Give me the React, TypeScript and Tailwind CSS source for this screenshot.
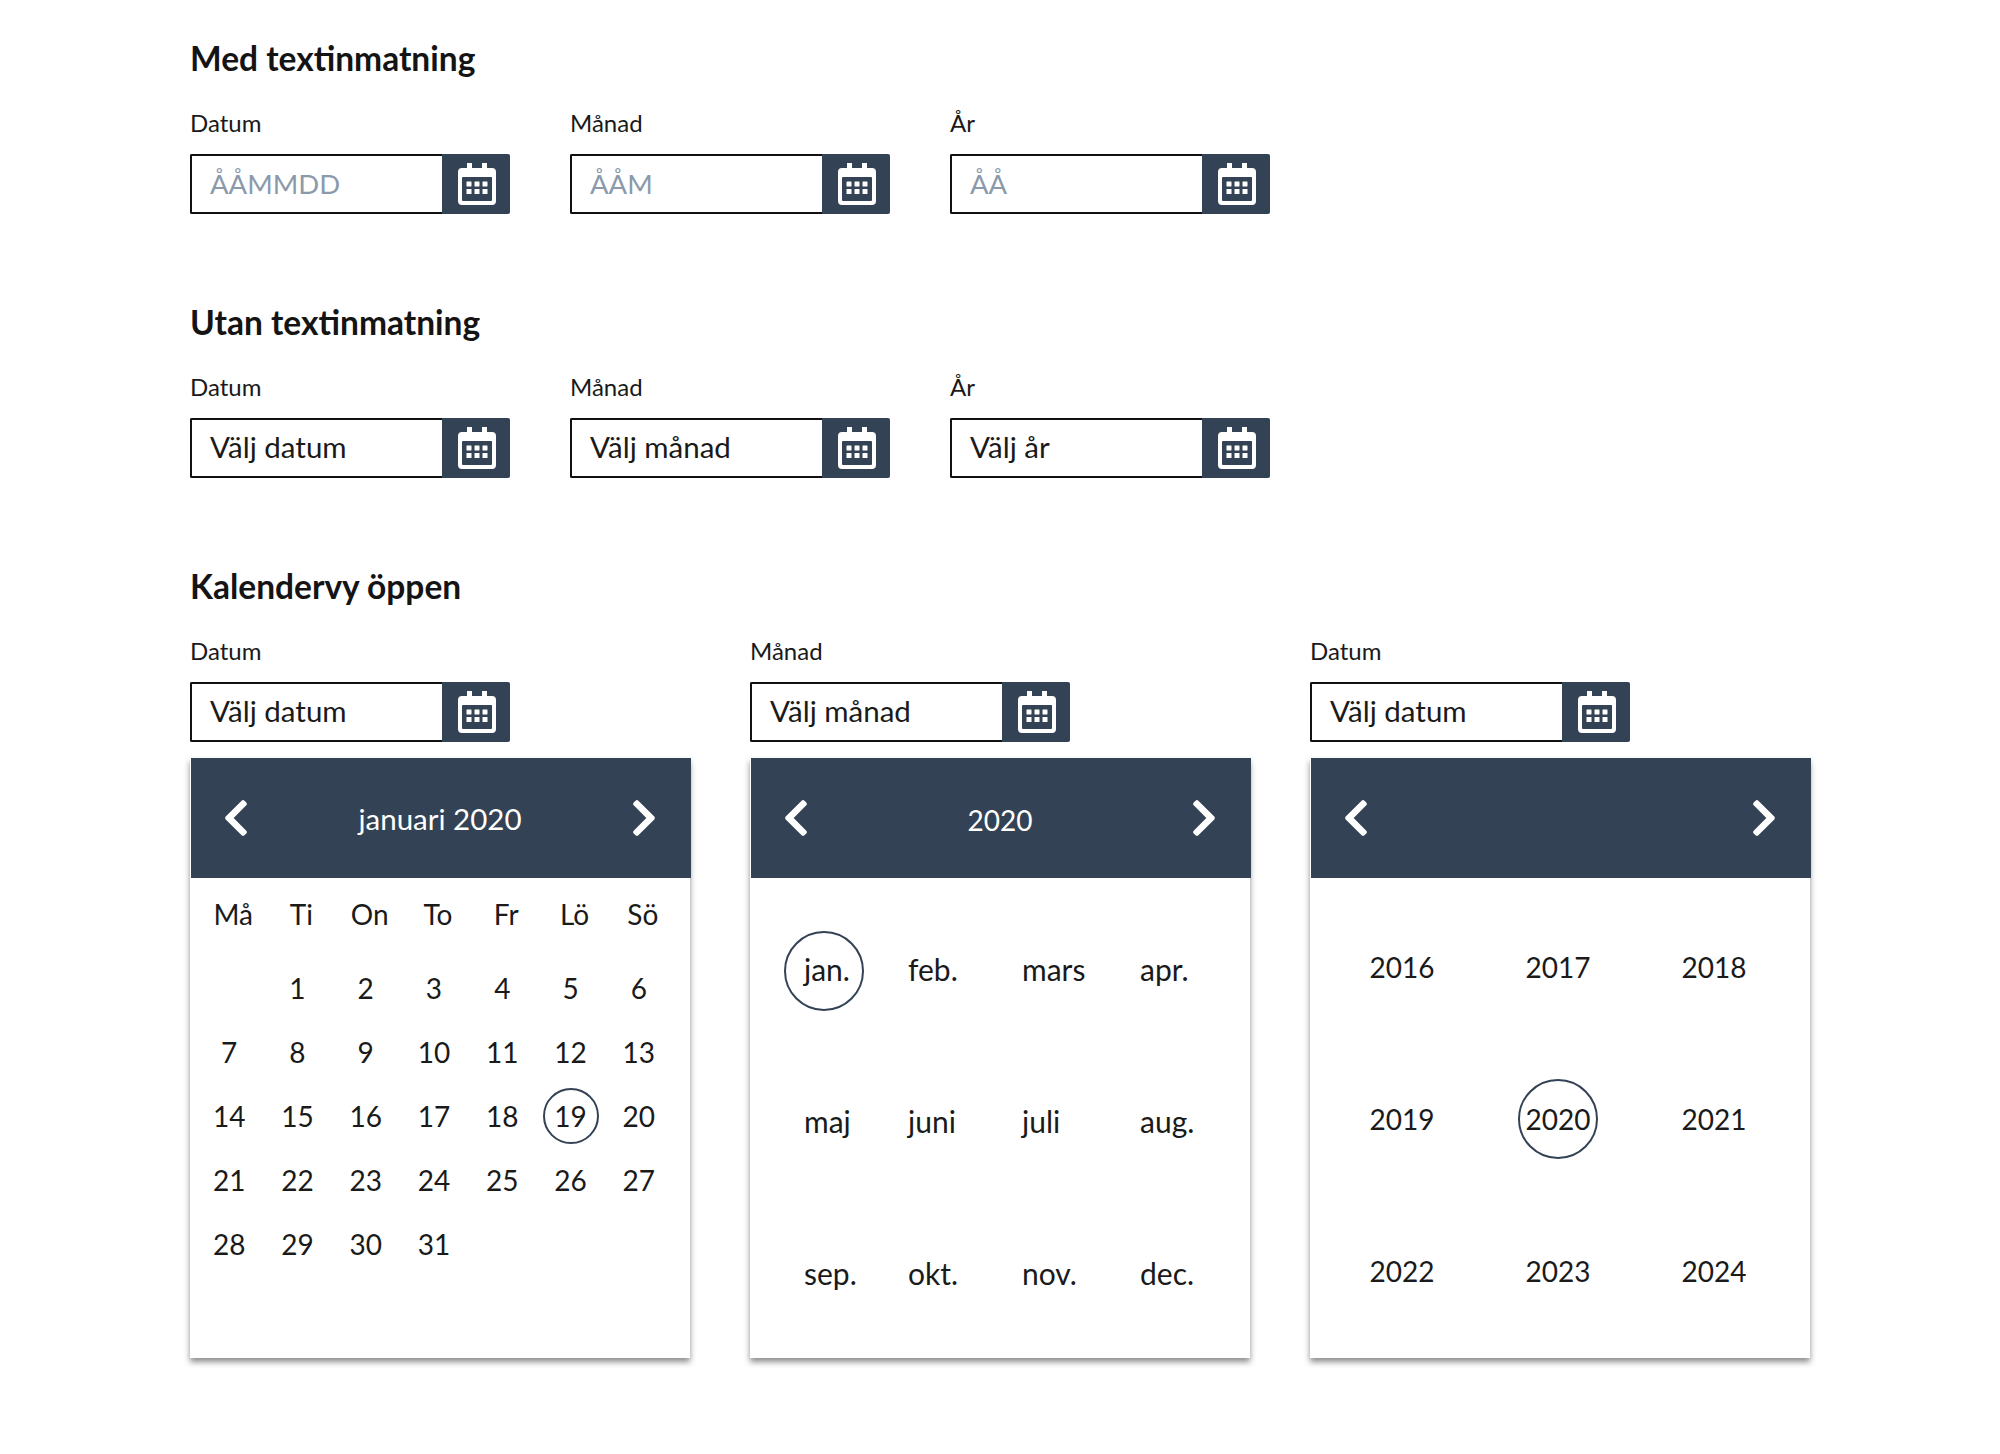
import type { ReactNode } from 'react'
import { FaChevronLeft, FaChevronRight } from 'react-icons/fa'

const NAVY = 'bg-[#334254]'

const WEEKDAYS = ['Må', 'Ti', 'On', 'To', 'Fr', 'Lö', 'Sö']
const DAYS: (number | null)[] = [null, ...Array.from({ length: 31 }, (_, i) => i + 1)]
const MONTHS = ['jan.', 'feb.', 'mars', 'apr.', 'maj', 'juni', 'juli', 'aug.', 'sep.', 'okt.', 'nov.', 'dec.']
const YEARS = [2016, 2017, 2018, 2019, 2020, 2021, 2022, 2023, 2024]

function CalendarIcon() {
  return (
    <svg width="38" height="42" viewBox="0 0 38 42" fill="none">
      <path d="M9 0h5v5h10V0h5v5h5a4 4 0 0 1 4 4v29a4 4 0 0 1-4 4H4a4 4 0 0 1-4-4V9a4 4 0 0 1 4-4h5z" fill="white" />
      <rect x="4" y="14" width="30" height="24" rx="1" fill="#334254" />
      <g fill="white">
        <rect x="8.5" y="18.5" width="5" height="5" rx="0.5" />
        <rect x="16.5" y="18.5" width="5" height="5" rx="0.5" />
        <rect x="24.5" y="18.5" width="5" height="5" rx="0.5" />
        <rect x="8.5" y="26" width="5" height="5" rx="0.5" />
        <rect x="16.5" y="26" width="5" height="5" rx="0.5" />
        <rect x="24.5" y="26" width="5" height="5" rx="0.5" />
      </g>
    </svg>
  )
}

function DateField({ label, value, placeholder }: { label: string; value?: string; placeholder?: string }) {
  return (
    <div className="w-[320px]">
      <p className="mb-[14px] h-[32px] text-[24px] leading-[30px] text-[#1a1a1a]">{label}</p>
      <div className="flex h-[60px]">
        <div className="flex min-w-0 flex-1 items-center rounded-l-[2px] border-2 border-r-0 border-[#111] bg-white pl-[18px]">
          {placeholder ? (
            <input
              readOnly
              placeholder={placeholder}
              className="w-full bg-transparent text-[27.5px] outline-none placeholder:text-[#8b9aab]"
            />
          ) : (
            <span className="pb-[2px] text-[29.5px] text-[#1a1a1a]">{value}</span>
          )}
        </div>
        <div className={`flex w-[68px] items-center justify-center rounded-r-[2px] pb-[1px] pl-[2px] ${NAVY}`}>
          <CalendarIcon />
        </div>
      </div>
    </div>
  )
}

function Heading({ children }: { children: ReactNode }) {
  return <h2 className="mb-[30px] h-[38px] text-[33.5px] leading-[36px] font-bold text-[#141414]">{children}</h2>
}

function Section({ title, children }: { title: string; children: ReactNode }) {
  return (
    <section className="mb-[90px]">
      <Heading>{title}</Heading>
      {children}
    </section>
  )
}

function CalendarPanel({ title, children }: { title?: ReactNode; children: ReactNode }) {
  return (
    <div className="h-[600px] w-[500px] bg-white shadow-[0_4px_6px_rgba(0,0,0,0.45)]">
      <div className={`ml-[1px] flex h-[120px] w-[500px] items-center justify-between pr-[26px] pl-[24px] text-white ${NAVY}`}>
        <FaChevronLeft size={42} />
        {title && <span className="mt-[3px]">{title}</span>}
        <FaChevronRight size={42} />
      </div>
      {children}
    </div>
  )
}

function Circled({ children, size }: { children: ReactNode; size: string }) {
  return (
    <span className={`flex items-center rounded-full border-2 border-[#334254] ${size}`}>
      {children}
    </span>
  )
}

export default function App() {
  return (
    <div className="min-h-[1454px] bg-white pt-[40px] pl-[190px] text-[#1a1a1a] [font-family:Lato,'Noto_Sans',sans-serif]">
      <Section title="Med textinmatning">
        <div className="flex gap-[60px]">
          <DateField label="Datum" placeholder="ÅÅMMDD" />
          <DateField label="Månad" placeholder="ÅÅM" />
          <DateField label="År" placeholder="ÅÅ" />
        </div>
      </Section>

      <Section title="Utan textinmatning">
        <div className="flex gap-[60px]">
          <DateField label="Datum" value="Välj datum" />
          <DateField label="Månad" value="Välj månad" />
          <DateField label="År" value="Välj år" />
        </div>
      </Section>

      <section>
        <Heading>Kalendervy öppen</Heading>
        <div className="flex gap-[60px]">
          <div>
            <DateField label="Datum" value="Välj datum" />
            <div className="mt-[16px]">
              <CalendarPanel title={<span className="text-[29.5px]">januari 2020</span>}>
                <div className="grid w-[487px] grid-cols-7 pt-[4px] pl-[9px] text-[28px]">
                  {WEEKDAYS.map((day) => (
                    <div key={day} className="flex h-[64px] items-center justify-center">
                      {day}
                    </div>
                  ))}
                </div>
                <div className="mt-[10px] grid w-[483px] grid-cols-7 pl-[5px] text-[28px]">
                  {DAYS.map((day, i) => (
                    <div key={i} className="flex h-[64px] items-center justify-center">
                      {day === 19 ? <Circled size="h-[56px] w-[56px] justify-center">{day}</Circled> : day}
                    </div>
                  ))}
                </div>
              </CalendarPanel>
            </div>
          </div>

          <div>
            <DateField label="Månad" value="Välj månad" />
            <div className="mt-[16px]">
              <CalendarPanel title={<span className="text-[28px]">2020</span>}>
                <div className="grid grid-cols-[104px_114px_118px_1fr] pt-[17px] pl-[34px] text-[30px]">
                  {MONTHS.map((month) => (
                    <div key={month} className="flex h-[152px] items-center">
                      {month === 'jan.' ? (
                        <Circled size="h-[80px] w-[80px] pb-[4px] pl-[18px]">{month}</Circled>
                      ) : (
                        <span className="pb-[4px] pl-[20px]">{month}</span>
                      )}
                    </div>
                  ))}
                </div>
              </CalendarPanel>
            </div>
          </div>

          <div>
            <DateField label="Datum" value="Välj datum" />
            <div className="mt-[16px]">
              <CalendarPanel>
                <div className="grid w-[482px] grid-cols-3 pt-[13px] pl-[14px] text-[28px]">
                  {YEARS.map((year) => (
                    <div key={year} className="flex h-[152px] items-center justify-center">
                      {year === 2020 ? <Circled size="h-[80px] w-[80px] justify-center">{year}</Circled> : year}
                    </div>
                  ))}
                </div>
              </CalendarPanel>
            </div>
          </div>
        </div>
      </section>
    </div>
  )
}
